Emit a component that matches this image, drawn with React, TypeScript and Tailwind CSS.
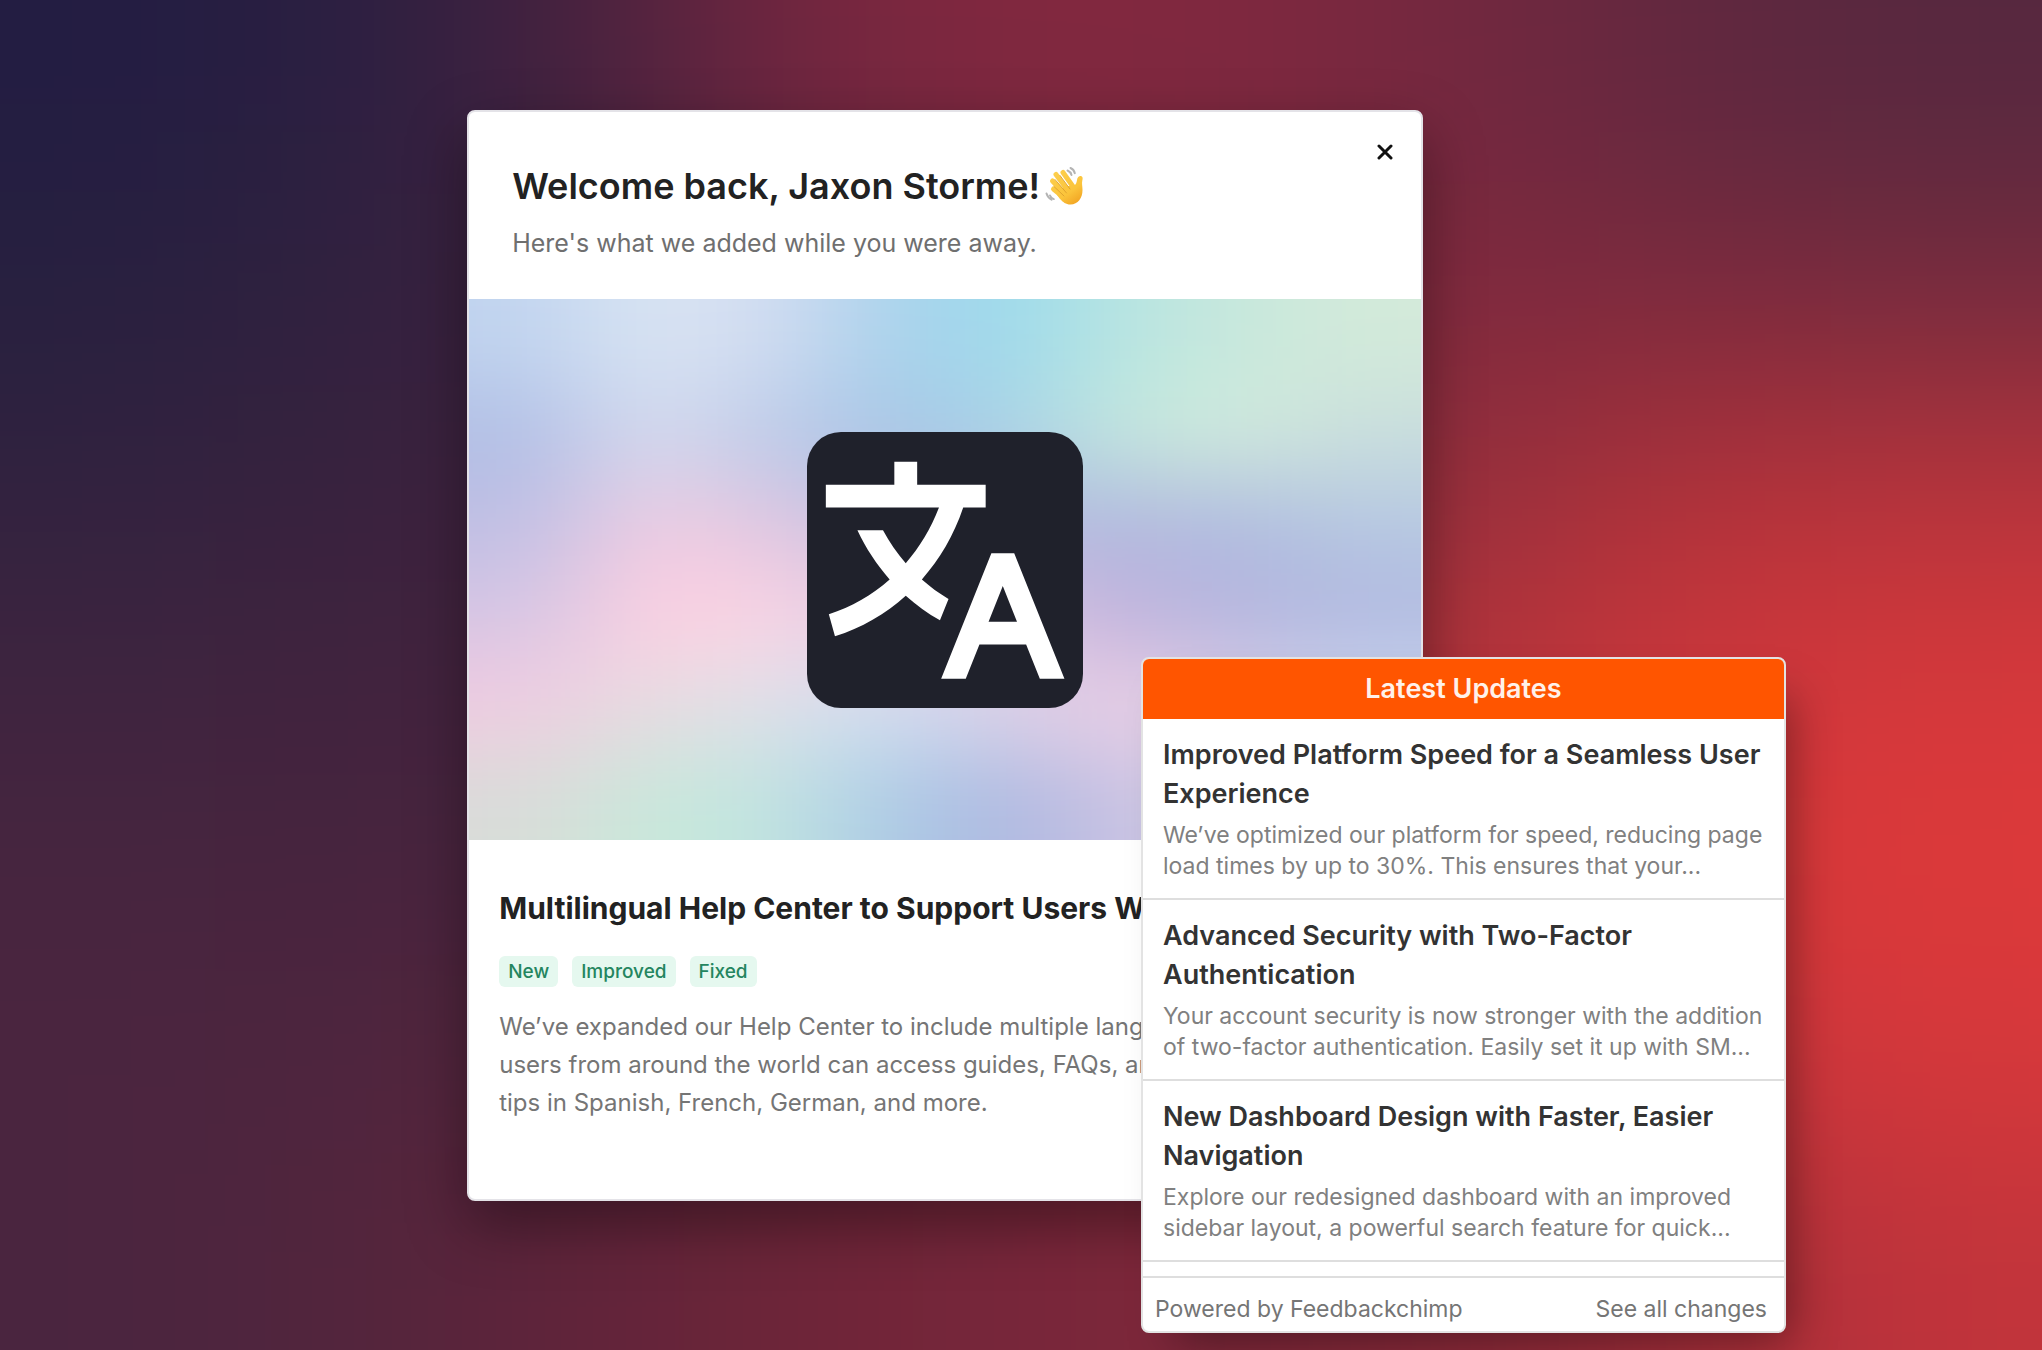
import clsx from "clsx";
import { RiTranslate2 } from "react-icons/ri";

const backdropColors = [
  ["#231d42", "#2a1f41", "#44223f", "#74263f", "#83283f", "#7f283f", "#72283f", "#60283f", "#57283f"],
  ["#27203f", "#31213f", "#3c213e", "#60243e", "#70263e", "#7a283e", "#80293e", "#7a2a3e", "#762b3e"],
  ["#31223f", "#37223e", "#40233e", "#5a243d", "#70263d", "#85293d", "#96303c", "#b0323b", "#b5343c"],
  ["#3e243f", "#40233e", "#45233e", "#5a243d", "#70263d", "#95303c", "#b8343b", "#cf373b", "#d6383b"],
  ["#47253f", "#47243e", "#4a243e", "#5a243c", "#70263c", "#95303c", "#b5343b", "#d4373b", "#dd393a"],
  ["#4b253f", "#4e253e", "#56253c", "#68253b", "#74263b", "#88293b", "#a52f3b", "#c8353b", "#d6383b"],
  ["#4a253f", "#52253d", "#60243a", "#6e2539", "#78263a", "#80283a", "#8c2a3a", "#a52e3a", "#c2343b"],
];

const heroColors = [
  ["#c1d4ef", "#d9e5f3", "#d3dcf1", "#acd2ec", "#9cdaec", "#b8e5e1", "#c8e8dc", "#d3eada"],
  ["#b0bee5", "#d4daee", "#bccae8", "#a6c4e6", "#a9d2e6", "#c6e9dd", "#d2ebdb", "#c9dedd"],
  ["#c0bfe4", "#efcce2", "#e2c6e0", "#c4c2e2", "#b0bae0", "#b1b7df", "#aebbe0", "#b6c8e2"],
  ["#d6c6e4", "#fed0e1", "#fcd3e3", "#e8cee4", "#dcc0e0", "#c1b2dc", "#b5b5de", "#b1b9e0"],
  ["#f2cbe1", "#e8dce1", "#dfe1e9", "#d2e0f2", "#ddd4e9", "#f0cfe4", "#d9d0e8", "#ccd9f0"],
  ["#d9dcd9", "#c8e9da", "#c1e4e0", "#accce6", "#adb8e1", "#c9c2e3", "#d5cee6", "#d0d4ea"],
];

const tags = ["New", "Improved", "Fixed"];

const updates = [
  {
    title: "Improved Platform Speed for a Seamless User Experience",
    description:
      "We’ve optimized our platform for speed, reducing page load times by up to 30%. This ensures that your...",
  },
  {
    title: "Advanced Security with Two-Factor Authentication",
    description:
      "Your account security is now stronger with the addition of two-factor authentication. Easily set it up with SM...",
  },
  {
    title: "New Dashboard Design with Faster, Easier Navigation",
    description:
      "Explore our redesigned dashboard with an improved sidebar layout, a powerful search feature for quick...",
  },
];

type MeshGradientProps = {
  id: string;
  colors: string[][];
  className?: string;
};

// Grid of colour cells, blurred together. Edge cells run past the view box so
// the blur never picks up transparency.
function MeshGradient({ id, colors, className }: MeshGradientProps) {
  const rows = colors.length;
  const cols = colors[0].length;

  return (
    <svg
      className={clsx("absolute inset-0 h-full w-full", className)}
      viewBox={`0 0 ${cols} ${rows}`}
      preserveAspectRatio="none"
      aria-hidden="true"
    >
      <filter
        id={id}
        filterUnits="userSpaceOnUse"
        x={-2}
        y={-2}
        width={cols + 4}
        height={rows + 4}
        colorInterpolationFilters="sRGB"
      >
        <feGaussianBlur stdDeviation="0.5" />
      </filter>
      <g filter={`url(#${id})`}>
        {colors.map((row, y) =>
          row.map((color, x) => {
            const left = x === 0 ? -2 : x;
            const top = y === 0 ? -2 : y;
            const right = x === cols - 1 ? cols + 2 : x + 1.02;
            const bottom = y === rows - 1 ? rows + 2 : y + 1.02;
            return (
              <rect
                key={`${x}-${y}`}
                x={left}
                y={top}
                width={right - left}
                height={bottom - top}
                fill={color}
              />
            );
          })
        )}
      </g>
    </svg>
  );
}

function WavingHand() {
  return (
    <svg
      className="h-10 w-[42px]"
      viewBox="5 4 42 40"
      fill="none"
      strokeLinecap="round"
      role="img"
      aria-label="Waving hand"
    >
      <defs>
        <linearGradient id="hand" x1="12" y1="8" x2="38" y2="44" gradientUnits="userSpaceOnUse">
          <stop offset="0" stopColor="#fdd04f" />
          <stop offset="0.65" stopColor="#fbc43b" />
          <stop offset="1" stopColor="#f0a020" />
        </linearGradient>
      </defs>
      <g stroke="#b4b4b4" strokeWidth="2">
        <path d="M28.500 8.500c2 .8 3.400 2.300 4 4.500M31.500 6c2.300 1 3.800 2.800 4.300 5.200" />
        <path d="M11 33.500c.6 1.800 1.800 3 3.800 3.600M7.500 31.500c.9 3 2.600 5 5 6.200" />
      </g>
      <g stroke="url(#hand)" strokeWidth="5">
        <path d="M24 10.500 35 26" />
        <path d="M17 12.500 30 30" />
        <path d="M13.500 19 28 34" />
        <path d="M14.500 27 28 38" />
      </g>
      <path
        d="M35 24c1.800-1.500 2.700-3.500 3-6 .3-3 2.700-4.600 4.500-3.800 1.500.7 1.300 2.300.8 4.300-.7 3 .2 5.500.2 9.500 0 8-4.500 14.500-12 14.500-4.800 0-7.500-2.500-10.500-5.500l-3-4 8-9z"
        fill="url(#hand)"
      />
      <g stroke="#dd9f2c" strokeWidth="0.9">
        <path d="M21 13.500 31 27" />
        <path d="M16 17.500 27.500 31" />
        <path d="M15 24.500 25 34" />
      </g>
    </svg>
  );
}

function WelcomeCard() {
  return (
    <main className="w-full max-w-[956px] overflow-hidden rounded-lg border-2 border-[#e4e3e8] bg-white shadow-[0_24px_60px_rgba(0,0,0,0.38)]">
      <header className="flex h-[187px] items-start justify-between pl-[43px]">
        <div className="pt-[50px]">
          <h1 className="flex items-center gap-1 text-[36px] leading-[48px] font-semibold text-[#222222]">
            Welcome back, Jaxon Storme! <WavingHand />
          </h1>
          <p className="mt-[14px] text-[25px] leading-[38px] text-[#6f6f6f]">
            Here's what we added while you were away.
          </p>
        </div>
        <button
          aria-label="Close"
          className="mt-[22px] mr-[18px] flex size-9 cursor-pointer items-center justify-center"
        >
          <svg className="size-4" viewBox="0 0 16 16" fill="none" stroke="#111111" strokeWidth="3" strokeLinecap="round">
            <path d="M2 2 14 14M14 2 2 14" />
          </svg>
        </button>
      </header>

      <div className="relative flex h-[541px] items-center justify-center overflow-hidden">
        <MeshGradient id="hero-mesh" colors={heroColors} />
        <div className="relative flex size-[276px] items-center justify-center rounded-[34px] bg-[#1f212b] pt-3 pr-[10px]">
          <RiTranslate2 className="size-[274px] shrink-0 text-white" />
        </div>
      </div>

      <article className="px-[30px] pt-[46px] pb-[77px]">
        <h2 className="text-[30px] leading-[44px] font-bold text-[#222222]">
          Multilingual Help Center to Support Users Worldwide
        </h2>
        <ul className="mt-[26px] flex gap-[14px]">
          {tags.map((tag) => (
            <li
              key={tag}
              className="rounded-md bg-[#e5f8ef] px-[9px] text-[19px] leading-[31px] font-medium text-[#24855f]"
            >
              {tag}
            </li>
          ))}
        </ul>
        <p className="mt-[21px] text-[24px] leading-[38px] text-[#757575]">
          We’ve expanded our Help Center to include multiple languages, ensuring that
          users from around the world can access guides, FAQs, and troubleshooting
          tips in Spanish, French, German, and more.
        </p>
      </article>
    </main>
  );
}

function UpdatesWidget() {
  return (
    <aside className="absolute right-64 bottom-[17px] w-[645px] overflow-hidden rounded-lg border-2 border-[#e3e3e3] bg-white shadow-[20px_24px_44px_-16px_rgba(0,0,0,0.4)]">
      <h2 className="bg-[#ff5500] text-center text-[27px] leading-[60px] font-semibold text-[#fff1ea]">
        Latest Updates
      </h2>
      <ul className="pb-[14px]">
        {updates.map((update) => (
          <li
            key={update.title}
            className="border-b-2 border-[#dedede] pt-4 pr-3 pb-4 pl-5"
          >
            <h3 className="text-[27px] leading-[39px] font-semibold text-[#333333]">
              {update.title}
            </h3>
            <p className="mt-[7px] text-[23px] leading-[31px] text-[#808080]">
              {update.description}
            </p>
          </li>
        ))}
      </ul>
      <footer className="flex justify-between border-t-2 border-[#dedede] pt-4 pr-[17px] pb-[6px] pl-3 text-[23px] leading-[31px] text-[#757575]">
        <span>Powered by Feedbackchimp</span>
        <a href="#changes">See all changes</a>
      </footer>
    </aside>
  );
}

export default function App() {
  return (
    <div className="relative min-h-screen overflow-hidden bg-[#48243f] font-['Inter',sans-serif]">
      <MeshGradient id="backdrop-mesh" colors={backdropColors} />
      <div className="relative pt-[110px] pb-[148px] pl-[22.88%]">
        <WelcomeCard />
      </div>
      <UpdatesWidget />
    </div>
  );
}
